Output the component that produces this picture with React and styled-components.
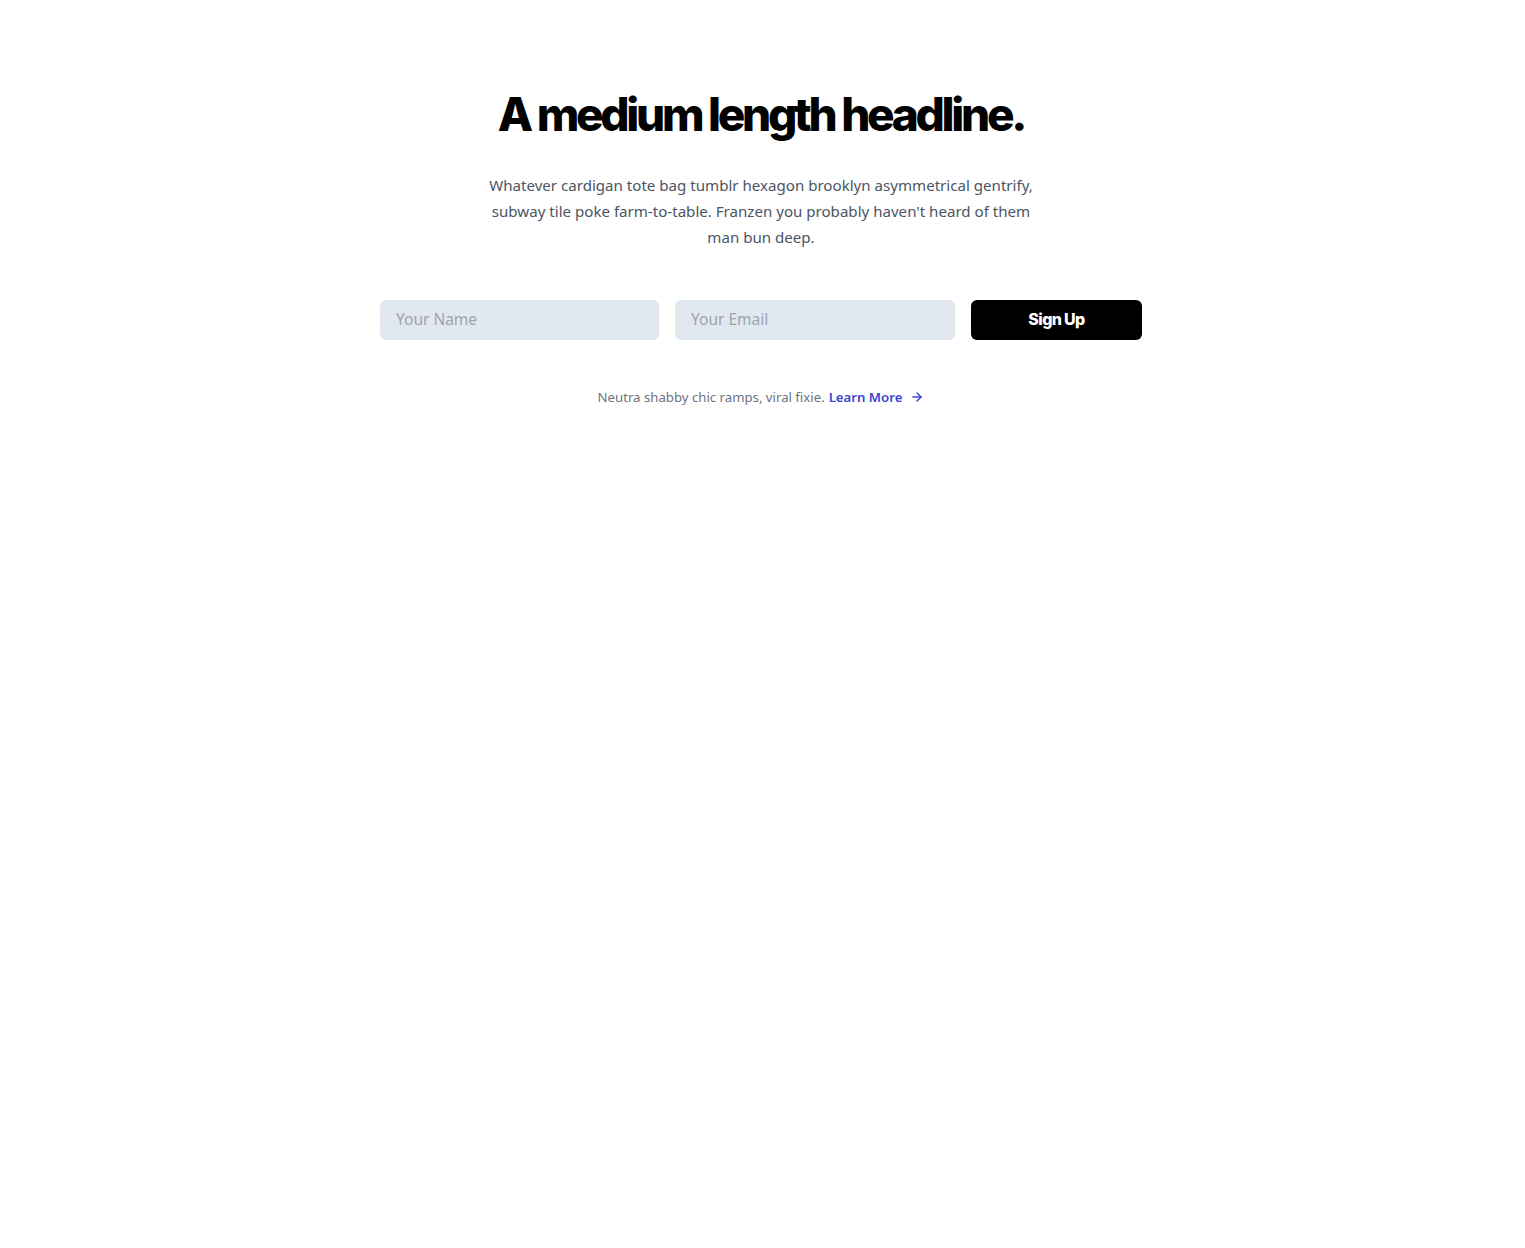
import React from "react";
import styled, { createGlobalStyle } from "styled-components";

const Global = createGlobalStyle`
  html, body { margin: 0; padding: 0; background: #fff; }
  body { font-family: "Noto Sans", "Open Sans", sans-serif; }
  * { box-sizing: border-box; }
`;

const Section = styled.section`
  display: flex;
  flex-direction: column;
  align-items: center;
  padding: 84px 27px 0 24px;
`;

const Headline = styled.h1`
  margin: 0;
  font-family: Inter, "Noto Sans", sans-serif;
  font-weight: 800;
  font-size: 46px;
  line-height: 60px;
  letter-spacing: -0.072em;
  color: #000;
`;

const Lead = styled.p`
  margin: 28px 0 0;
  max-width: 560px;
  text-align: center;
  font-size: 15.1px;
  line-height: 26px;
  color: #4b5563;
`;

const Form = styled.form`
  display: grid;
  grid-template-columns: 279px 280px 171px;
  gap: 16px;
  margin-top: 50px;
`;

const Input = styled.input`
  height: 40px;
  border: none;
  border-radius: 6px;
  background: #e2e8f0;
  padding: 0 16px 3px;
  font-family: inherit;
  font-size: 15.5px;
  color: #374151;
  outline: none;
  &::placeholder { color: #9ca3af; }
`;

const Button = styled.button`
  height: 40px;
  border: none;
  border-radius: 6px;
  background: #000;
  color: #fff;
  padding: 0 0 3px;
  font-family: Inter, "Noto Sans", sans-serif;
  font-weight: 800;
  font-size: 16px;
  letter-spacing: -0.04em;
  cursor: pointer;
`;

const Note = styled.p`
  margin: 47px 0 0;
  font-size: 13.2px;
  line-height: 20px;
  color: #6b7280;
  display: flex;
  align-items: center;
  gap: 4px;
`;

const Link = styled.a`
  color: #3b45d6;
  font-weight: 600;
  text-decoration: none;
  display: inline-flex;
  align-items: center;
  gap: 8px;
`;

export default function App() {
  return (
    <>
      <Global />
      <Section>
        <Headline>A medium length headline.</Headline>
        <Lead>
          Whatever cardigan tote bag tumblr hexagon brooklyn asymmetrical gentrify,
          subway tile poke farm-to-table. Franzen you probably haven't heard of them
          man bun deep.
        </Lead>
        <Form onSubmit={(e) => e.preventDefault()}>
          <Input placeholder="Your Name" />
          <Input placeholder="Your Email" />
          <Button type="submit">Sign Up</Button>
        </Form>
        <Note>
          Neutra shabby chic ramps, viral fixie.
          <Link href="#">
            Learn More
            <svg width="14" height="14" viewBox="0 0 24 24" fill="none" stroke="currentColor" strokeWidth="2.5" strokeLinecap="round" strokeLinejoin="round">
              <path d="M5 12h14" />
              <path d="M12 5l7 7-7 7" />
            </svg>
          </Link>
        </Note>
      </Section>
    </>
  );
}
